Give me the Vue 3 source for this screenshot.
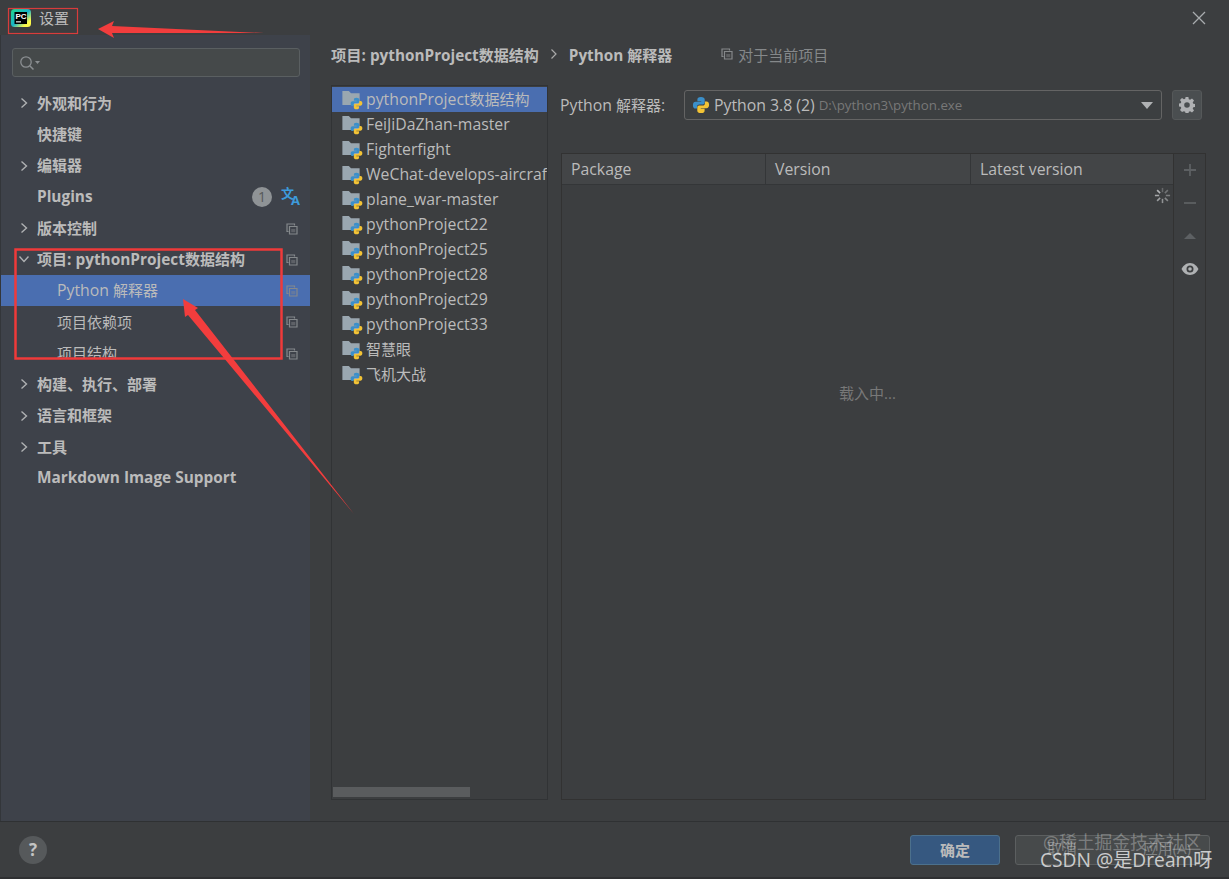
<script setup>
const navItems = [
  { label: '外观和行为', arrow: 'right', bold: true },
  { label: '快捷键', bold: true },
  { label: '编辑器', arrow: 'right', bold: true },
  { label: 'Plugins', bold: true, plugins: true },
  { label: '版本控制', arrow: 'right', bold: true, copy: true },
  { label: '项目: pythonProject数据结构', arrow: 'down', bold: true, copy: true },
  { label: 'Python 解释器', sub: true, active: true, copy: true },
  { label: '项目依赖项', sub: true, copy: true },
  { label: '项目结构', sub: true, copy: true, clipped: true },
  { label: '构建、执行、部署', arrow: 'right', bold: true },
  { label: '语言和框架', arrow: 'right', bold: true },
  { label: '工具', arrow: 'right', bold: true },
  { label: 'Markdown Image Support', bold: true }
]

const projects = [
  'pythonProject数据结构',
  'FeiJiDaZhan-master',
  'Fighterfight',
  'WeChat-develops-aircraft',
  'plane_war-master',
  'pythonProject22',
  'pythonProject25',
  'pythonProject28',
  'pythonProject29',
  'pythonProject33',
  '智慧眼',
  '飞机大战'
]

const columns = ['Package', 'Version', 'Latest version']

// spinner ticks, fading round the circle
const ticks = Array.from({ length: 8 }, (_, i) => ({
  angle: i * 45,
  opacity: 0.35 + i * 0.09
}))

// latin glyphs run a bit wider than the CJK ones in the IDE font, so split them
const runs = (text) =>
  text
    .split(/([\u4e00-\u9fff、]+)/)
    .filter(Boolean)
    .map((t) => ({ t, cjk: /[\u4e00-\u9fff、]/.test(t) }))
</script>

<template>
  <div class="window">
    <svg class="defs" width="0" height="0">
      <linearGradient id="logo-frame" x1="0" y1="0" x2="1" y2="1">
        <stop offset="0" stop-color="#21d789" />
        <stop offset="0.5" stop-color="#18b4c9" />
        <stop offset="0.8" stop-color="#fcf84a" />
      </linearGradient>
      <symbol id="py" viewBox="0 0 16 16">
        <path fill="#3b8fc9" d="M8 .8C5.6.8 4.8 1.8 4.8 3v1.6h3.4v.6H3.2C1.8 5.2.8 6.2.8 8.2c0 2 1 3 2.2 3h1.500V9.400c0-1.100.9-1.900 2-1.900h3.100c1 0 1.700-.7 1.700-1.700V3c0-1.200-1.100-2.200-3.300-2.200z" />
        <path fill="#f2c335" d="M8 15.200c2.400 0 3.200-1 3.200-2.200v-1.600H7.800v-.6h5c1.400 0 2.400-1 2.400-3 0-2-1-3-2.200-3h-1.500v1.800c0 1.100-.9 1.900-2 1.900H6.400c-1 0-1.700.7-1.700 1.700V13c0 1.200 1.100 2.200 3.300 2.200z" />
      </symbol>
      <symbol id="copy" viewBox="0 0 12 12">
        <path fill="none" stroke="currentColor" stroke-width="1.200" d="M2.500 8.500H1V1h7.500v1.500M3.500 3.500H11V11H3.500z" />
        <path fill="currentColor" d="M5.200 6h4.100v3.200H5.200z" opacity=".45" />
      </symbol>
    </svg>

    <header class="titlebar">
      <svg class="app-logo" viewBox="0 0 20 18" width="20" height="18">
        <rect width="20" height="18" rx="3.500" fill="url(#logo-frame)" />
        <rect x="3.500" y="3" width="12.500" height="12" fill="#000" />
        <rect x="5" y="12.300" width="5" height="1.100" fill="#fff" />
        <text x="4.500" y="10" class="logo-text">PC</text>
      </svg>
      <span class="title">设置</span>
      <svg class="close" viewBox="0 0 14 14" width="14" height="14">
        <path d="M1 1l12 12M13 1L1 13" stroke="#a9acae" stroke-width="1.300" fill="none" />
      </svg>
    </header>

    <div class="content">
      <aside class="sidebar">
        <div class="search">
          <svg viewBox="0 0 22 16" width="22" height="16">
            <circle cx="7" cy="7" r="5.200" fill="none" stroke="#8b8f92" stroke-width="1.300" />
            <path d="M11 11l3.500 3.500" stroke="#8b8f92" stroke-width="1.500" />
            <path d="M16 6h5l-2.500 3z" fill="#8b8f92" />
          </svg>
        </div>
        <nav class="nav">
          <div
            v-for="item in navItems"
            :key="item.label"
            class="nav-row"
            :class="{ active: item.active, sub: item.sub, bold: item.bold }"
          >
            <svg v-if="item.arrow" class="arrow" viewBox="0 0 10 12" width="10" height="12">
              <path v-if="item.arrow === 'right'" d="M2.500 1.500L7.500 6l-5 4.500" />
              <path v-else d="M.5 3.500L5 8.500l4.500-5" />
            </svg>
            <span class="nav-label" :class="{ clipped: item.clipped }">
              <span v-for="r in runs(item.label)" :key="r.t" :class="{ cjk: r.cjk }">{{ r.t }}</span>
            </span>
            <template v-if="item.plugins">
              <span class="badge">1</span>
              <span class="translate"><span class="tr-zh">文</span><span class="tr-en">A</span></span>
            </template>
            <svg v-if="item.copy" class="copy-icon" width="12" height="12"><use href="#copy" /></svg>
          </div>
        </nav>
      </aside>

      <main class="main">
        <div class="crumbs">
          <strong>项目: pythonProject<span class="cjk">数据结构</span></strong>
          <svg class="crumb-sep" viewBox="0 0 8 12" width="8" height="12">
            <path d="M1.500 1.500L6 6l-4.500 4.500" fill="none" stroke="#aaa" stroke-width="1.200" />
          </svg>
          <strong>Python <span class="cjk">解释器</span></strong>
          <svg class="crumb-copy" width="12" height="12"><use href="#copy" /></svg>
          <span class="crumb-note">对于当前项目</span>
        </div>

        <div class="panes">
          <section class="project-list">
            <div class="project-rows">
              <div
                v-for="(name, i) in projects"
                :key="name"
                class="project-row"
                :class="{ selected: i === 0 }"
              >
                <span class="folder">
                  <svg viewBox="0 0 16 13" width="18" height="14">
                    <path fill="#9aa7b0" d="M0 0h6l2 2h8v11H0z" />
                  </svg>
                  <svg class="folder-py" width="13" height="13"><use href="#py" /></svg>
                </span>
                <span class="project-name">
                  <span v-for="r in runs(name)" :key="r.t" :class="{ cjk: r.cjk }">{{ r.t }}</span>
                </span>
              </div>
            </div>
            <div class="hscroll"><div class="hthumb"></div></div>
          </section>

          <section class="interpreter">
            <div class="interp-row">
              <label>Python <span class="cjk">解释器</span>:</label>
              <div class="select">
                <svg width="18" height="18"><use href="#py" /></svg>
                <span class="select-name">Python 3.8 (2)</span>
                <span class="select-path">D:\python3\python.exe</span>
                <span class="caret"></span>
              </div>
              <button class="gear">
                <svg viewBox="0 0 16 16" width="16" height="16">
                  <path fill="#afb1b3" fill-rule="evenodd" d="M6.600 0h2.800l.4 2.200 1.300.6L13 1.500l2 2-1.300 1.900.6 1.300 2.200.4v2.800l-2.200.4-.6 1.300 1.300 1.900-2 2-1.900-1.300-1.300.6-.4 2.200H6.600l-.4-2.200-1.300-.6L3 15l-2-2 1.300-1.900-.6-1.300L-.500 9.400V6.600l2.200-.4.600-1.300L1 3l2-2 1.900 1.300 1.300-.6zM8 5.200a2.800 2.800 0 1 0 0 5.600 2.800 2.800 0 0 0 0-5.600z" />
                </svg>
              </button>
            </div>

            <div class="table-wrap">
              <div class="table">
                <div class="thead">
                  <div v-for="col in columns" :key="col" class="th">{{ col }}</div>
                </div>
                <div class="tbody">
                  <svg class="spinner" viewBox="0 0 20 20" width="19" height="19">
                    <line
                      v-for="t in ticks"
                      :key="t.angle"
                      x1="10" y1="2" x2="10" y2="6.500"
                      stroke="#b4b6b8"
                      stroke-width="1.600"
                      :opacity="t.opacity"
                      :transform="`rotate(${t.angle} 10 10)`"
                    />
                  </svg>
                  <span class="loading">载入中...</span>
                </div>
              </div>
              <div class="tools">
                <svg viewBox="0 0 14 14" width="14" height="14"><path d="M7 1v12M1 7h12" stroke="#5d6063" stroke-width="1.800" /></svg>
                <svg viewBox="0 0 14 14" width="14" height="14"><path d="M1 7h12" stroke="#5d6063" stroke-width="1.800" /></svg>
                <svg viewBox="0 0 14 14" width="14" height="14"><path d="M1 10L7 4l6 6z" fill="#5d6063" /></svg>
                <svg viewBox="0 0 18 14" width="18" height="14">
                  <path fill="#afb1b3" fill-rule="evenodd" d="M9 1c4 0 7 3 8.500 6-1.500 3-4.500 6-8.500 6S2 10 .5 7C2 4 5 1 9 1zm0 2.500a3.500 3.500 0 1 0 0 7 3.500 3.500 0 0 0 0-7z" />
                  <circle cx="9" cy="7" r="1.800" fill="#afb1b3" />
                </svg>
              </div>
            </div>
          </section>
        </div>
      </main>
    </div>

    <footer class="footer">
      <span class="help">?</span>
      <button class="btn primary">确定</button>
      <button class="btn secondary"><span>取消</span><span>应用(A)</span></button>
    </footer>
    <div class="bottom-edge"></div>

    <!-- annotations drawn over the screenshot -->
    <svg class="marks" viewBox="0 0 1229 879" width="1229" height="879">
      <rect x="8.500" y="8.500" width="69" height="25" fill="none" stroke="#d83c3c" stroke-width="1.200" />
      <rect x="15.500" y="249.500" width="266" height="109" fill="none" stroke="#ef3a3a" stroke-width="2.500" />
      <polygon fill="#f23d3d" points="98,29 114,21 112,26 264,33 112,33 114,38" />
      <polygon fill="#f23d3d" points="183,299 198,308 195,310 354,514 188,315 185,317" />
    </svg>

    <div class="watermark">
      <span class="wm-juejin">@稀土掘金技术社区</span>
      <span class="wm-csdn">CSDN @是Dream呀</span>
    </div>
  </div>
</template>

<style>
html,
body {
  margin: 0;
  background: #3c3f41;
}
</style>

<style scoped>
.window {
  position: relative;
  width: 1229px;
  height: 879px;
  overflow: hidden;
  display: flex;
  flex-direction: column;
  background: #3c3e40;
  color: #bbbbbb;
  font-family: "Open Sans", "Noto Sans CJK SC", sans-serif;
  font-size: 15.800px;
}
.cjk {
  font-size: 15px;
}
.defs {
  position: absolute;
}
.titlebar {
  height: 35px;
  flex: none;
  display: flex;
  align-items: center;
  padding: 0 23px 0 11px;
  box-sizing: border-box;
}
.app-logo {
  margin-right: 8px;
}
.logo-text {
  font: 700 8px "Liberation Sans", sans-serif;
  fill: #fff;
}
.title {
  flex: 1;
  font-size: 15px;
}
.content {
  flex: 1;
  display: flex;
  min-height: 0;
}
.sidebar {
  width: 310px;
  flex: none;
  background: #3e424a;
  border-left: 1px solid #33363a;
  box-sizing: border-box;
  padding-top: 13px;
}
.search {
  height: 29px;
  margin: 0 10px 0 11px;
  box-sizing: border-box;
  border: 1px solid #5a5f61;
  border-radius: 3px;
  background: #45494a;
  display: flex;
  align-items: center;
  padding-left: 6px;
}
.nav {
  margin-top: 10.500px;
}
.nav-row {
  position: relative;
  height: 31.250px;
  display: flex;
  align-items: center;
  padding-left: 36px;
  white-space: nowrap;
}
.nav-row.sub {
  padding-left: 56px;
}
.nav-row.bold {
  font-weight: 700;
  font-size: 15.400px;
}
.nav-label {
  margin-top: -0.500px;
}
.nav-row.active {
  background: #4a6eb0;
}
.arrow {
  position: absolute;
  left: 18px;
  top: 9.500px;
  fill: none;
  stroke: #afb1b3;
  stroke-width: 1.400;
}
.nav-label.clipped {
  height: 13px;
  line-height: 16px;
  overflow: hidden;
  align-self: flex-start;
  margin-top: 7px;
}
.copy-icon {
  position: absolute;
  left: 285px;
  top: 10px;
  color: #84888b;
}
.badge {
  position: absolute;
  left: 251px;
  top: 5.500px;
  width: 20px;
  height: 20px;
  border-radius: 50%;
  background: #8f9396;
  color: #55585a;
  font-size: 14px;
  font-weight: 400;
  line-height: 20px;
  text-align: center;
}
.translate {
  position: absolute;
  left: 280px;
  top: 5px;
  width: 19px;
  height: 20px;
  color: #3d9bdc;
  font-weight: 700;
}
.tr-zh {
  position: absolute;
  left: 0;
  top: -3px;
  font-size: 13px;
}
.tr-en {
  position: absolute;
  right: 0;
  bottom: -2px;
  font-size: 13px;
  line-height: 15px;
}
.main {
  flex: 1;
  min-width: 0;
  padding: 0 23px 21px 21px;
  display: flex;
  flex-direction: column;
}
.crumbs {
  height: 38px;
  flex: none;
  display: flex;
  align-items: center;
  white-space: pre;
}
.crumbs strong {
  font-weight: 700;
  font-size: 15.300px;
}
.crumb-sep {
  margin: 0 11px 0 11px;
}
.crumb-copy {
  margin: 0 5px 0 49px;
  color: #85888a;
}
.crumb-note {
  color: #85888a;
  font-size: 15px;
}
.panes {
  flex: 1;
  min-height: 0;
  margin-top: 12px;
  display: flex;
}
.project-list {
  width: 217px;
  flex: none;
  box-sizing: border-box;
  border: 1px solid #313335;
  display: flex;
  flex-direction: column;
  overflow: hidden;
}
.project-rows {
  flex: 1;
  padding-top: 1px;
}
.project-row {
  height: 25px;
  display: flex;
  align-items: center;
  padding-left: 10px;
  white-space: nowrap;
}
.project-name {
  margin-top: -2px;
}
.project-row.selected {
  background: #4a6eb0;
}
.folder {
  position: relative;
  width: 24px;
  height: 20px;
  flex: none;
}
.folder svg:first-child {
  position: absolute;
  left: 0;
  top: 1px;
}
.folder-py {
  position: absolute;
  left: 8px;
  top: 7px;
}
.hscroll {
  height: 10px;
  margin-bottom: 2px;
  flex: none;
}
.hthumb {
  width: 137px;
  height: 10px;
  margin-left: 1px;
  background: #5a5c5e;
}
.interpreter {
  flex: 1;
  min-width: 0;
  margin-left: 12px;
  display: flex;
  flex-direction: column;
}
.interp-row {
  display: flex;
  align-items: center;
  height: 30px;
  margin-top: 5px;
  flex: none;
}
.interp-row label {
  width: 124px;
  flex: none;
  margin-top: -1px;
}
.select {
  width: 478px;
  height: 30px;
  box-sizing: border-box;
  border: 1px solid #646464;
  border-radius: 3px;
  display: flex;
  align-items: center;
  padding: 0 8px 0 7px;
  gap: 4px;
  background: #3c3f41;
}
.select-name {
  margin-top: -1px;
}
.select-path {
  flex: 1;
  font-size: 13.300px;
  color: #787878;
}
.caret {
  width: 0;
  height: 0;
  border-left: 6px solid transparent;
  border-right: 6px solid transparent;
  border-top: 7px solid #afb1b3;
}
.gear {
  width: 30px;
  height: 30px;
  margin-left: 10px;
  padding: 0;
  box-sizing: border-box;
  border: 1px solid #555859;
  border-radius: 3px;
  background: #4a4e50;
  display: flex;
  align-items: center;
  justify-content: center;
}
.table-wrap {
  flex: 1;
  min-height: 0;
  margin-top: 33px;
  margin-left: 1px;
  box-sizing: border-box;
  border: 1px solid #323232;
  display: flex;
}
.table {
  flex: 1;
  min-width: 0;
  display: flex;
  flex-direction: column;
}
.thead {
  height: 31px;
  flex: none;
  display: grid;
  grid-template-columns: 203px 205px 1fr;
  background: #434547;
  border-bottom: 1px solid #343638;
  box-sizing: border-box;
}
.th {
  padding-left: 9px;
  line-height: 31px;
  border-left: 1px solid #343638;
}
.th:first-child {
  border-left: 0;
}
.tbody {
  position: relative;
  flex: 1;
  display: flex;
  align-items: flex-start;
  justify-content: center;
  padding-top: 197px;
}
.spinner {
  position: absolute;
  right: 1px;
  top: 1px;
}
.loading {
  color: #787878;
  font-size: 15px;
}
.tools {
  width: 32px;
  flex: none;
  box-sizing: border-box;
  border-left: 1px solid #323232;
  display: flex;
  flex-direction: column;
  align-items: center;
  gap: 19px;
  padding-top: 9px;
}
.footer {
  height: 56px;
  flex: none;
  box-sizing: border-box;
  border-top: 1px solid #2f3133;
  display: flex;
  align-items: center;
  padding: 0 19px 0 19px;
  font-size: 15px;
}
.help {
  width: 28px;
  height: 28px;
  border-radius: 50%;
  background: #56595b;
  color: #c4c4c4;
  font-weight: 700;
  font-size: 17px;
  line-height: 28px;
  text-align: center;
  margin-right: auto;
}
.btn {
  height: 30px;
  box-sizing: border-box;
  border-radius: 3px;
  font: inherit;
  color: #bbbbbb;
  padding: 0;
}
.primary {
  width: 90px;
  background: #365880;
  border: 1px solid #4c708c;
  font-weight: 700;
}
.secondary {
  width: 195px;
  margin-left: 15px;
  background: #474a4b;
  border: 1px solid #5c5f60;
  display: flex;
  align-items: center;
  justify-content: space-between;
  padding: 0 18px 4px 31px;
  color: #808283;
}
.bottom-edge {
  height: 2px;
  flex: none;
  background: #2f3032;
}
.marks {
  position: absolute;
  left: 0;
  top: 0;
  pointer-events: none;
}
.watermark {
  position: absolute;
  left: 1040px;
  top: 831px;
  display: flex;
  flex-direction: column;
  white-space: nowrap;
  pointer-events: none;
}
.wm-juejin {
  margin-left: 3px;
  font-size: 17.800px;
  line-height: 22px;
  color: rgba(255, 255, 255, 0.3);
}
.wm-csdn {
  margin-top: -5px;
  font-size: 19.200px;
  line-height: 23px;
  color: rgba(255, 255, 255, 0.72);
}
</style>
